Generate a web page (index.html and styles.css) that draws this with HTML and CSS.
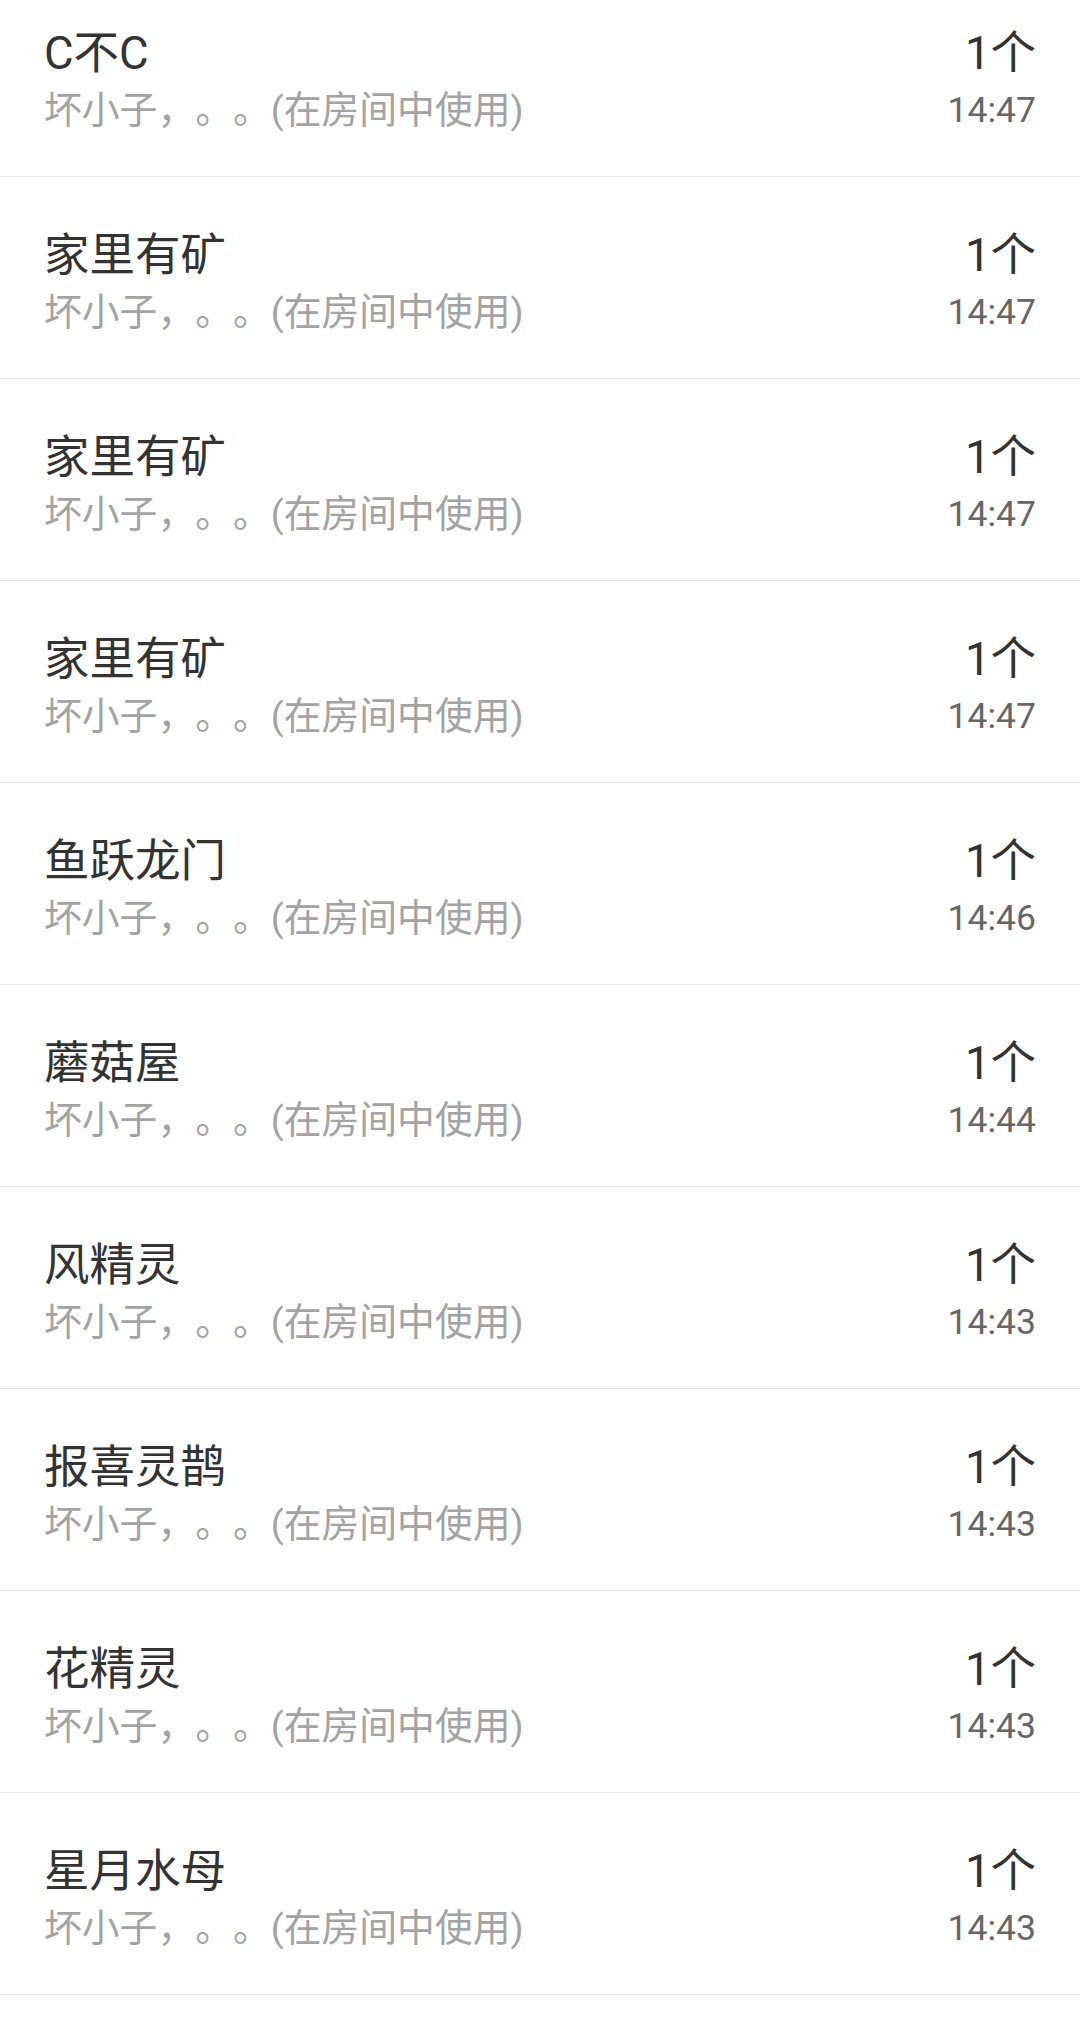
FILE: index.html
```html
<!DOCTYPE html>
<html lang="zh-CN">
<head>
<meta charset="utf-8">
<title>使用记录</title>
<link rel="stylesheet" href="styles.css">
</head>
<body>
<ul class="list">
  <li class="row"><div class="info"><div class="title">C不C</div><div class="sub">坏小子，。。(在房间中使用)</div></div><div class="meta"><div class="count">1个</div><div class="time">14:47</div></div></li>
  <li class="row"><div class="info"><div class="title">家里有矿</div><div class="sub">坏小子，。。(在房间中使用)</div></div><div class="meta"><div class="count">1个</div><div class="time">14:47</div></div></li>
  <li class="row"><div class="info"><div class="title">家里有矿</div><div class="sub">坏小子，。。(在房间中使用)</div></div><div class="meta"><div class="count">1个</div><div class="time">14:47</div></div></li>
  <li class="row"><div class="info"><div class="title">家里有矿</div><div class="sub">坏小子，。。(在房间中使用)</div></div><div class="meta"><div class="count">1个</div><div class="time">14:47</div></div></li>
  <li class="row"><div class="info"><div class="title">鱼跃龙门</div><div class="sub">坏小子，。。(在房间中使用)</div></div><div class="meta"><div class="count">1个</div><div class="time">14:46</div></div></li>
  <li class="row"><div class="info"><div class="title">蘑菇屋</div><div class="sub">坏小子，。。(在房间中使用)</div></div><div class="meta"><div class="count">1个</div><div class="time">14:44</div></div></li>
  <li class="row"><div class="info"><div class="title">风精灵</div><div class="sub">坏小子，。。(在房间中使用)</div></div><div class="meta"><div class="count">1个</div><div class="time">14:43</div></div></li>
  <li class="row"><div class="info"><div class="title">报喜灵鹊</div><div class="sub">坏小子，。。(在房间中使用)</div></div><div class="meta"><div class="count">1个</div><div class="time">14:43</div></div></li>
  <li class="row"><div class="info"><div class="title">花精灵</div><div class="sub">坏小子，。。(在房间中使用)</div></div><div class="meta"><div class="count">1个</div><div class="time">14:43</div></div></li>
  <li class="row"><div class="info"><div class="title">星月水母</div><div class="sub">坏小子，。。(在房间中使用)</div></div><div class="meta"><div class="count">1个</div><div class="time">14:43</div></div></li>
</ul>
</body>
</html>
```
FILE: styles.css
```css
html, body {
  margin: 0;
  padding: 0;
  background: #ffffff;
  overflow: hidden;
}
body {
  font-family: Roboto, "Noto Sans CJK SC", sans-serif;
  text-spacing-trim: space-all;
  width: 1080px;
  height: 2031px;
}
.list {
  list-style: none;
  margin: -25px 0 0 0;
  padding: 0;
}
.row {
  display: flex;
  justify-content: space-between;
  align-items: flex-start;
  height: 201px;
  padding: 0 44px;
  box-sizing: content-box;
  border-bottom: 1px solid #e5e5e5;
}
.info, .meta {
  padding-top: 53px;
}
.meta {
  text-align: right;
}
.title, .count {
  font-size: 45.5px;
  line-height: 52px;
  color: #333333;
}
.sub, .time {
  font-size: 37.8px;
  line-height: 44px;
  margin-top: 8px;
}
.sub {
  color: #a3a3a3;
}
.time {
  font-size: 35.5px;
  color: #666666;
}
```
